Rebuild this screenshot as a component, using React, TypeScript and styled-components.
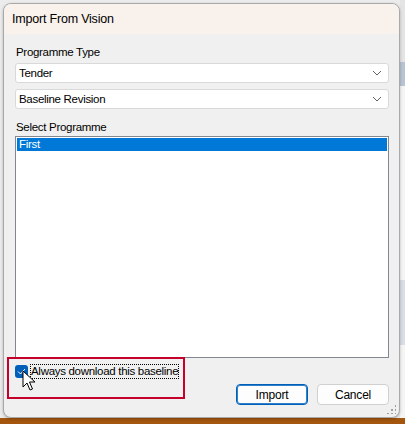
import React from "react";
import styled, { createGlobalStyle } from "styled-components";

const GlobalStyle = createGlobalStyle`
  html, body {
    margin: 0;
    padding: 0;
    background: #ececec;
  }
  * {
    box-sizing: border-box;
  }
`;

const font = `"Liberation Sans", Arial, sans-serif`;

export const Screen = styled.div`
  position: relative;
  width: 405px;
  height: 424px;
  overflow: hidden;
  padding: 3px 5px 0 3px;
  background: linear-gradient(to bottom, #ececec 418px, #a4560e 418px);
  font-family: ${font};
  font-size: 11.5px;
  letter-spacing: -0.3px;
  color: #000;
`;

export const SideStrip = styled.div`
  position: absolute;
  top: 0;
  right: 0;
  width: 5px;
  height: 418px;
  background: linear-gradient(
    to bottom,
    #e4e4e4 0,
    #e4e4e4 62px,
    #b9c4d2 62px,
    #b9c4d2 86px,
    #f5f5f5 86px,
    #f5f5f5 280px,
    #d8dde6 280px,
    #d8dde6 345px,
    #f5f5f5 345px
  );
`;

export const Dialog = styled.div`
  position: relative;
  z-index: 1;
  width: 397px;
  height: 415px;
  display: flex;
  flex-direction: column;
  background: #f0f0f0;
  border: 1px solid #a9a9a9;
  border-radius: 8px;
  box-shadow: 0 1px 3px rgba(0, 0, 0, 0.25);
  overflow: hidden;
`;

export const TitleBar = styled.div`
  height: 30px;
  display: flex;
  align-items: center;
  padding-left: 8px;
  background: #f9f1ec;
  font-size: 12.5px;
  letter-spacing: -0.2px;
`;

export const Body = styled.div`
  flex: 1;
  display: flex;
  flex-direction: column;
  padding: 10px 10px 0 11px;
`;

export const FieldLabel = styled.div<{ $top?: number }>`
  height: 16px;
  line-height: 16px;
  margin-top: ${(p) => p.$top ?? 0}px;
  padding-left: 1px;
`;

export const Combo = styled.div<{ $top: number }>`
  height: 20px;
  margin-top: ${(p) => p.$top}px;
  display: flex;
  align-items: center;
  justify-content: space-between;
  padding: 0 6px 0 3px;
  background: #fff;
  border: 1px solid #d9d9d9;
  border-radius: 3px;
`;

export const ListBox = styled.div`
  height: 222px;
  margin-top: 1px;
  padding: 1px;
  background: #fff;
  border: 1px solid #828790;
`;

export const ListItem = styled.div<{ $selected?: boolean }>`
  height: 13px;
  line-height: 13px;
  padding-left: 2px;
  background: ${(p) => (p.$selected ? "#0078d7" : "transparent")};
  color: ${(p) => (p.$selected ? "#fff" : "#000")};
`;

export const CheckRow = styled.div`
  margin-top: 6px;
  height: 15px;
  display: flex;
  align-items: center;
  gap: 2px;
`;

export const CheckBox = styled.div`
  width: 13px;
  height: 13px;
  border-radius: 3px;
  background: #005fb8;
  display: flex;
  align-items: center;
  justify-content: center;
`;

export const CheckLabel = styled.span`
  height: 15px;
  line-height: 14px;
  padding: 0 1px;
  outline: 1px dotted #000;
  outline-offset: -1px;
`;

export const ButtonRow = styled.div`
  margin-top: 5px;
  display: flex;
  justify-content: flex-end;
  gap: 9px;
`;

export const Button = styled.button<{ $primary?: boolean }>`
  width: 72px;
  height: 21px;
  padding: 0;
  font-family: ${font};
  font-size: 12px;
  letter-spacing: -0.2px;
  color: #000;
  background: #fdfdfd;
  border: 1px solid ${(p) => (p.$primary ? "#005fb8" : "#d0d0d0")};
  box-shadow: ${(p) => (p.$primary ? "inset 0 0 0 1px #2f7fcb" : "none")};
  border-radius: 4px;
`;

export const Grip = styled.div`
  position: absolute;
  right: 3px;
  bottom: 3px;
  width: 10px;
  height: 10px;
  background-image: radial-gradient(circle, #a0a0a0 1px, transparent 1.2px);
  background-size: 4px 4px;
  clip-path: polygon(100% 0, 100% 100%, 0 100%);
`;

export const Highlight = styled.div`
  position: absolute;
  z-index: 2;
  left: 7px;
  top: 357px;
  width: 178px;
  height: 42px;
  border: 2px solid #c4002b;
`;

export const Pointer = styled.svg`
  position: absolute;
  z-index: 3;
  left: 22px;
  top: 370px;
`;

const Chevron = () => (
  <svg width="10" height="6" viewBox="0 0 10 6">
    <path d="M1 1 L5 5 L9 1" fill="none" stroke="#606060" strokeWidth="1" />
  </svg>
);

export default function App() {
  return (
    <>
      <GlobalStyle />
      <Screen>
        <SideStrip />
        <Dialog>
          <TitleBar>Import From Vision</TitleBar>
          <Body>
            <FieldLabel>Programme Type</FieldLabel>
            <Combo $top={3}>
              <span>Tender</span>
              <Chevron />
            </Combo>
            <Combo $top={6}>
              <span>Baseline Revision</span>
              <Chevron />
            </Combo>
            <FieldLabel $top={10}>Select Programme</FieldLabel>
            <ListBox>
              <ListItem $selected>First</ListItem>
            </ListBox>
            <CheckRow>
              <CheckBox>
                <svg width="9" height="7" viewBox="0 0 9 7">
                  <path d="M1 3.5 L3.5 6 L8 1" fill="none" stroke="#fff" strokeWidth="1" />
                </svg>
              </CheckBox>
              <CheckLabel>Always download this baseline</CheckLabel>
            </CheckRow>
            <ButtonRow>
              <Button $primary>Import</Button>
              <Button>Cancel</Button>
            </ButtonRow>
          </Body>
          <Grip />
        </Dialog>
        <Highlight />
        <Pointer width="14" height="22" viewBox="0 0 14 22">
          <path
            d="M1 1 L1 17 L5 13 L8 20 L10.5 19 L7.5 12 L13 12 Z"
            fill="#fff"
            stroke="#000"
            strokeWidth="1"
            strokeLinejoin="round"
          />
        </Pointer>
      </Screen>
    </>
  );
}
